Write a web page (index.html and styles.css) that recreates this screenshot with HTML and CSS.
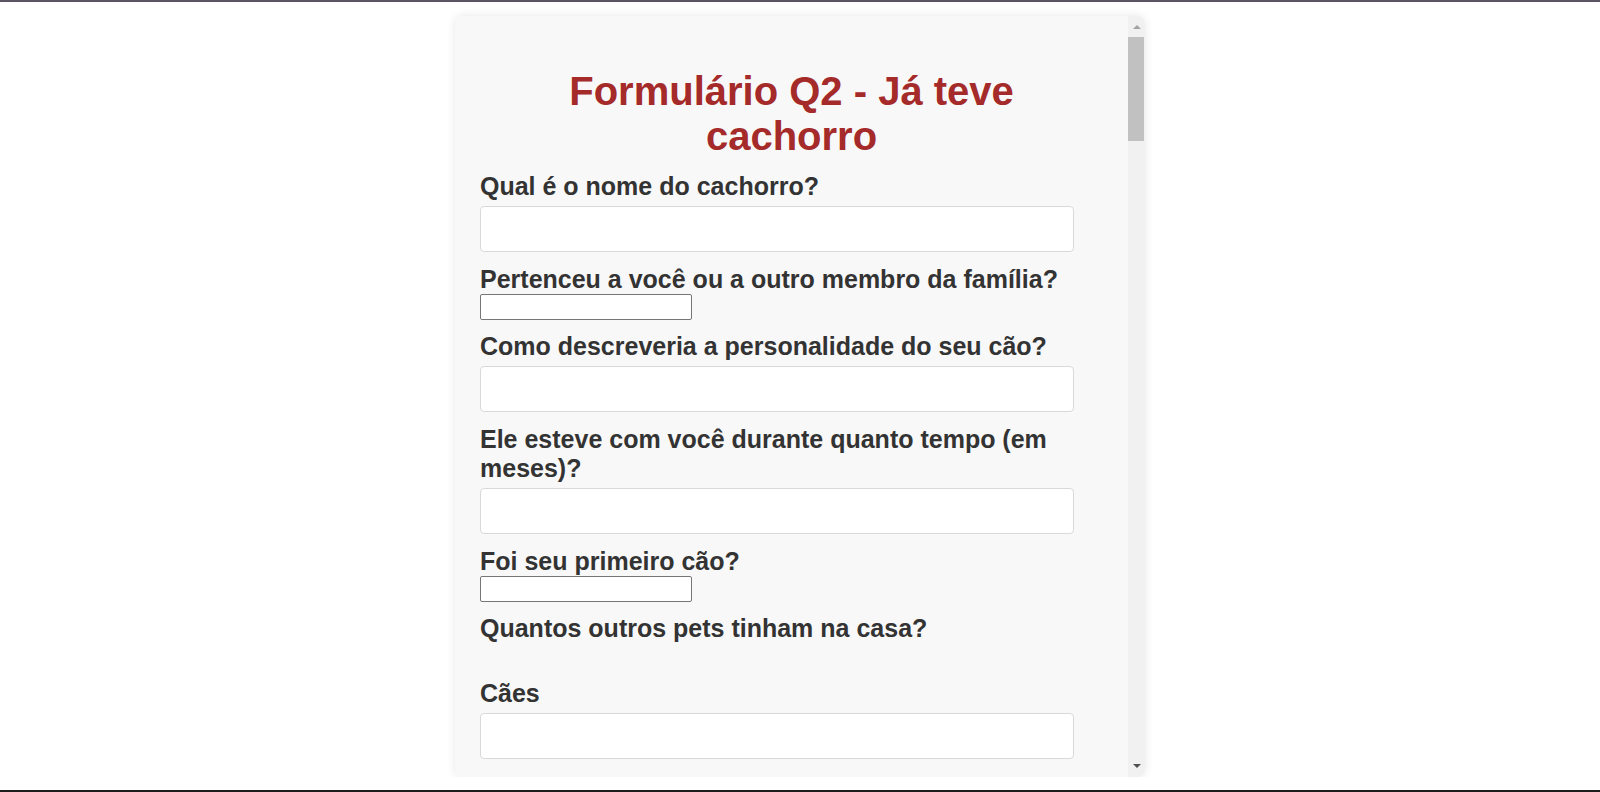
FILE: index.html
```html
<!DOCTYPE html>
<html lang="pt-BR">
<head>
<meta charset="utf-8">
<title>Formulário Q2 - Já teve cachorro</title>
<link rel="stylesheet" href="styles.css">
</head>
<body>
<div class="card">
  <div class="scroll-area">
    <h1 class="title">Formulário Q2 - Já teve cachorro</h1>
    <form class="form">
      <label class="label">Qual é o nome do cachorro?</label>
      <input class="field" type="text">
      <label class="label">Pertenceu a você ou a outro membro da família?</label>
      <input class="plain" type="text">
      <label class="label">Como descreveria a personalidade do seu cão?</label>
      <input class="field" type="text">
      <label class="label">Ele esteve com você durante quanto tempo (em meses)?</label>
      <input class="field" type="text">
      <label class="label">Foi seu primeiro cão?</label>
      <input class="plain" type="text">
      <p class="label section">Quantos outros pets tinham na casa?</p>
      <label class="label">Cães</label>
      <input class="field" type="text">
      <label class="label">Gatos</label>
      <input class="field" type="text">
      <label class="label">Outros</label>
      <input class="field" type="text">
    </form>
  </div>
  <div class="scrollbar">
    <div class="sb-btn"><span class="arrow-up"></span></div>
    <div class="sb-thumb"></div>
    <div class="sb-track"></div>
    <div class="sb-btn sb-btn-down"><span class="arrow-down"></span></div>
  </div>
</div>
</body>
</html>
```
FILE: styles.css
```css
html {
  height: 792px;
  box-sizing: border-box;
  border-top: 2px solid #5b5563;
  border-bottom: 2px solid #1c1c1c;
  background: #ffffff;
}
body {
  margin: 0;
  padding-top: 14px;
  font-family: "Liberation Sans", Arial, sans-serif;
  color: #333333;
}
.card {
  width: 690px;
  height: 761px;
  margin: 0 auto;
  display: flex;
  background: #f8f8f8;
  border-radius: 8px;
  box-shadow: 0 0 10px rgba(0, 0, 0, 0.1);
  overflow: hidden;
}
.scroll-area {
  flex: 1;
  overflow: hidden;
  padding: 0 25px;
}
.title {
  margin: 53px 0 13px;
  font-size: 40px;
  font-weight: bold;
  line-height: normal;
  text-align: center;
  color: #a52a2a;
}
.form {
  display: flex;
  flex-direction: column;
  align-items: flex-start;
}
.label {
  display: block;
  margin: 0;
  font-size: 25px;
  font-weight: bold;
  line-height: normal;
  color: #333333;
}
.section {
  margin-bottom: 36px;
}
.field {
  box-sizing: border-box;
  width: 594px;
  height: 46px;
  margin: 5px 0 13px;
  padding: 0 10px;
  background: #ffffff;
  border: 1px solid #d9d9d9;
  border-radius: 4px;
  font-size: 16px;
}
.plain {
  box-sizing: border-box;
  width: 212px;
  height: 26px;
  margin: 0 0 12px;
  padding: 1px 2px;
  background: #ffffff;
  border: 1px solid #767676;
  border-radius: 2px;
  font-size: 16px;
}
.scrollbar {
  width: 17px;
  flex: none;
  display: flex;
  flex-direction: column;
  background: #f1f1f1;
}
.sb-btn {
  height: 21px;
  display: flex;
  align-items: center;
  justify-content: center;
  flex: none;
}
.sb-btn-down {
  height: 23px;
  align-items: flex-start;
  padding-top: 10px;
  box-sizing: border-box;
}
.arrow-up {
  width: 0;
  height: 0;
  border-left: 4px solid transparent;
  border-right: 4px solid transparent;
  border-bottom: 4px solid #a3a3a3;
}
.arrow-down {
  width: 0;
  height: 0;
  border-left: 4px solid transparent;
  border-right: 4px solid transparent;
  border-top: 4px solid #505050;
}
.sb-thumb {
  height: 104px;
  margin: 0 1px 0 0;
  background: #c1c1c1;
  flex: none;
}
.sb-track {
  flex: 1;
}
```
